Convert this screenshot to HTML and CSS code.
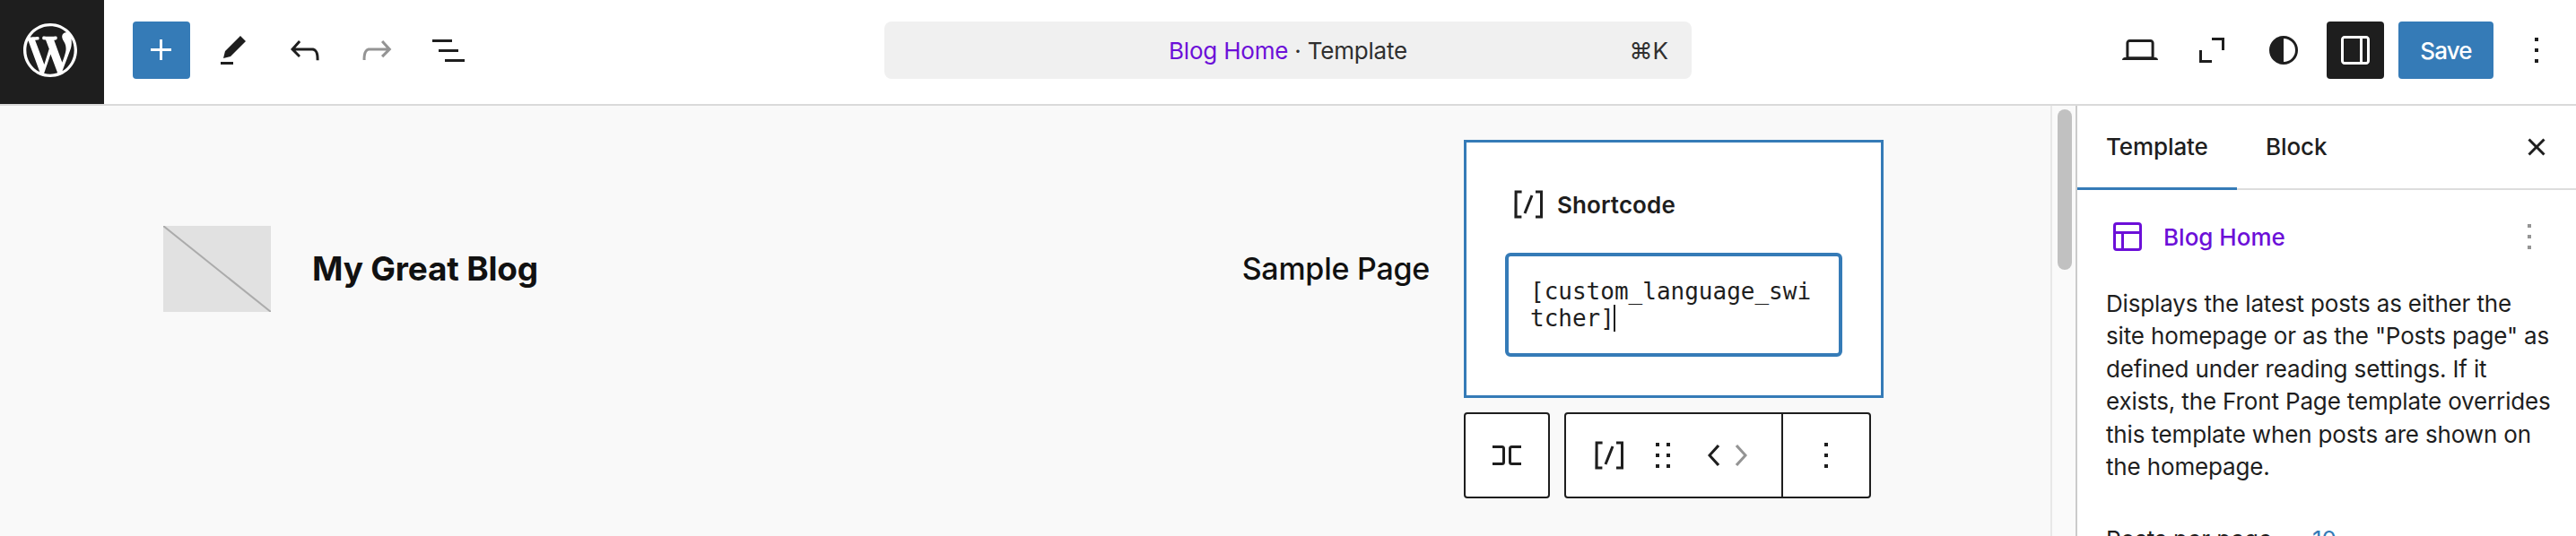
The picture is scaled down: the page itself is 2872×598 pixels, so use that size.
FILE: index.html
```html
<!DOCTYPE html>
<html lang="en">
<head>
<meta charset="utf-8">
<title>Blog Home · Template</title>
<link rel="stylesheet" href="styles.css">
</head>
<body>
<div class="editor">
  <header class="topbar">
    <a class="site-hub" aria-label="WordPress"><svg class="wp-logo" viewBox="-2 -2 24 24"><path d="M20 10c0-5.51-4.49-10-10-10C4.48 0 0 4.49 0 10c0 5.52 4.48 10 10 10 5.51 0 10-4.48 10-10zM7.78 15.37L4.37 6.22c.55-.02 1.17-.08 1.17-.08.5-.06.44-1.13-.06-1.11 0 0-1.45.11-2.37.11-.18 0-.37 0-.58-.01C4.12 2.69 6.87 1.11 10 1.11c2.33 0 4.45.87 6.05 2.34-.68-.11-1.65.39-1.65 1.58 0 .74.45 1.36.9 2.1.35.61.55 1.36.55 2.46 0 1.49-1.4 5-1.4 5l-3.03-8.37c.54-.02.82-.17.82-.17.5-.05.44-1.25-.06-1.22 0 0-1.44.12-2.38.12-.87 0-2.33-.12-2.33-.12-.5-.03-.56 1.2-.06 1.22l.92.08 1.26 3.41zM17.41 10c.24-.64.74-1.87.43-4.25.7 1.29 1.05 2.71 1.05 4.25 0 3.29-1.73 6.24-4.4 7.78.97-2.59 1.94-5.2 2.92-7.78zM6.1 18.09C3.12 16.65 1.11 13.53 1.11 10c0-1.3.23-2.48.72-3.59C3.25 10.3 4.67 14.2 6.1 18.09zm4.03-6.63l2.58 6.98c-.86.29-1.76.45-2.71.45-.79 0-1.57-.11-2.29-.33.81-2.38 1.62-4.74 2.42-7.1z"/></svg></a>
    <div class="tools">
      <a class="btn primary"><svg class="icon" viewBox="0 0 24 24"><path d="M11 12.5V17.5H12.5V12.5H17.5V11H12.5V6H11V11H6V12.5H11Z"/></svg></a>
      <a class="btn"><svg class="icon" viewBox="0 0 24 24"><path d="m19 7-3-3-8.5 8.5-1 4 4-1L19 7Zm-7 11.5H5V20h7v-1.5Z"/></svg></a>
      <a class="btn"><svg class="icon" viewBox="0 0 24 24"><path d="M18.3 11.7c-.6-.6-1.4-.9-2.3-.9H6.7l2.9-3.3-1.1-1-4.5 5L8.5 16l1-1-2.7-2.7H16c.5 0 .9.2 1.3.5 1 1 1 3.4 1 4.5v.3h1.5v-.2c0-1.5 0-4.3-1.5-5.7z"/></svg></a>
      <a class="btn disabled"><svg class="icon" viewBox="0 0 24 24"><path d="M15.6 6.5l-1.1 1 2.9 3.3H8c-.9 0-1.7.3-2.3.9-1.4 1.5-1.4 4.2-1.4 5.6v.2h1.5v-.3c0-1.1 0-3.5 1-4.5.3-.3.7-.5 1.3-.5h9.2L14.5 15l1.1 1.1 4.6-4.6-4.6-5z"/></svg></a>
      <a class="btn"><svg class="icon" viewBox="0 0 24 24"><path d="M3 6h11v1.5H3V6Zm3.5 5.5h11V13h-11v-1.5ZM21 17H10v1.5h11V17Z"/></svg></a>
    </div>
    <div class="command">
      <span></span>
      <span class="command-title"><span class="accent">Blog Home</span> · Template</span>
      <span class="command-key">⌘K</span>
    </div>
    <div class="actions">
      <a class="btn"><svg class="icon" viewBox="0 0 24 24"><path d="M20.5 16h-.7V8c0-1.1-.9-2-2-2H6.2c-1.1 0-2 .9-2 2v8h-.7c-.8 0-1.5.7-1.5 1.5h20c0-.8-.7-1.5-1.5-1.5zM5.7 8c0-.3.2-.5.5-.5h11.6c.3 0 .5.2.5.5v7.6H5.7V8z"/></svg></a>
      <a class="btn"><svg class="icon" viewBox="0 0 24 24"><path d="M12 5h7v7h-1.500V6.500H12zM5 12h1.500v5.500H12V19H5z"/></svg></a>
      <a class="btn"><svg class="icon" viewBox="0 0 24 24"><path fill-rule="evenodd" d="M20 12a8 8 0 1 1-16 0 8 8 0 0 1 16 0Zm-1.5 0a6.500 6.500 0 0 1-6.500 6.500v-13a6.500 6.500 0 0 1 6.500 6.500Z"/></svg></a>
      <a class="btn pressed"><svg class="icon" viewBox="0 0 24 24"><path fill-rule="evenodd" d="M18 4H6c-1.1 0-2 .9-2 2v12c0 1.1.9 2 2 2h12c1.1 0 2-.9 2-2V6c0-1.1-.9-2-2-2zM14.500 18.500H6c-.3 0-.5-.2-.5-.5V6c0-.3.2-.5.5-.5h8.500v13zm4-.5c0 .3-.2.5-.5.5h-2v-13h2c.3 0 .5.2.5.5v12z"/></svg></a>
      <a class="btn primary save">Save</a>
      <a class="btn"><svg class="icon" viewBox="0 0 24 24"><path d="M13 19h-2v-2h2v2zm0-6h-2v-2h2v2zm0-6h-2V5h2v2z"/></svg></a>
    </div>
  </header>
  <div class="body">
    <main class="canvas">
      <div class="site-header">
        <svg class="logo-placeholder" viewBox="0 0 120 96"><path d="M0 0L120 96"/></svg>
        <h1 class="site-title">My Great Blog</h1>
        <nav class="site-nav">Sample Page</nav>
        <section class="shortcode">
          <div class="shortcode-label"><svg class="icon" viewBox="0 0 24 24"><path d="M16 4.2v1.5h2.5v12.5H16v1.5h4V4.2h-4zM4.2 19.8h4v-1.5H5.8V5.8h2.5V4.2h-4l-.1 15.6zm5.1-3.1l1.4.6 4-10-1.4-.6-4 10z"/></svg><span>Shortcode</span></div>
          <div class="shortcode-input">[custom_language_switcher]<span class="caret"></span></div>
        </section>
      </div>
      <div class="block-toolbar">
        <div class="toolbar-box parent"><svg class="icon outline" viewBox="0 0 24 24"><path d="M4 7.250h5.250a1 1 0 0 1 1 1v7.500a1 1 0 0 1-1 1H4M20 7.250h-5.250a1 1 0 0 0-1 1v7.500a1 1 0 0 0 1 1H20"/></svg></div>
        <div class="toolbar-box">
          <div class="toolbar-group">
            <svg class="icon" viewBox="0 0 24 24"><path d="M16 4.2v1.5h2.5v12.5H16v1.5h4V4.2h-4zM4.2 19.8h4v-1.5H5.8V5.8h2.5V4.2h-4l-.1 15.6zm5.1-3.1l1.4.6 4-10-1.4-.6-4 10z"/></svg>
            <svg class="icon drag" viewBox="0 0 24 24"><path d="M8 7h2V5H8v2zm0 6h2v-2H8v2zm0 6h2v-2H8v2zm6-14v2h2V5h-2zm0 8h2v-2h-2v2zm0 6h2v-2h-2v2z"/></svg>
            <svg class="mover" viewBox="5 0 14 24"><path d="M14.6 7l-1.2-1L8 12l5.4 6 1.2-1-4.6-5z"/></svg>
            <svg class="mover disabled" viewBox="5 0 14 24"><path d="M10.6 6L9.4 7l4.6 5-4.6 5 1.2 1 5.4-6z"/></svg>
          </div>
          <div class="toolbar-more"><svg class="icon" viewBox="0 0 24 24"><path d="M13 19h-2v-2h2v2zm0-6h-2v-2h2v2zm0-6h-2V5h2v2z"/></svg></div>
        </div>
      </div>
    </main>
    <div class="scroll-track"><div class="scroll-thumb"></div></div>
    <aside class="sidebar">
      <div class="tabs">
        <div class="tab active">Template</div>
        <div class="tab">Block</div>
        <a class="btn close"><svg class="icon" viewBox="0 0 24 24"><path d="M12 13.060l3.712 3.713 1.061-1.060L13.061 12l3.712-3.712-1.060-1.060L12 10.938 8.288 7.227l-1.061 1.060L10.939 12l-3.712 3.712 1.060 1.061L12 13.061z"/></svg></a>
      </div>
      <div class="card">
        <svg class="icon accent" viewBox="0 0 24 24"><path fill-rule="evenodd" d="M18 5.500H6a.5.5 0 0 0-.5.5v3h13V6a.5.5 0 0 0-.5-.5zm.5 5H10v8h8a.5.5 0 0 0 .5-.5v-7.500zm-10 0h-3V18a.5.5 0 0 0 .5.5h2.500v-8zM6 4h12a2 2 0 0 1 2 2v12a2 2 0 0 1-2 2H6a2 2 0 0 1-2-2V6a2 2 0 0 1 2-2z"/></svg>
        <h2 class="card-title accent">Blog Home</h2>
        <svg class="icon disabled" viewBox="0 0 24 24"><path d="M13 19h-2v-2h2v2zm0-6h-2v-2h2v2zm0-6h-2V5h2v2z"/></svg>
      </div>
      <p class="description">Displays the latest posts as either the<br>site homepage or as the "Posts page" as<br>defined under reading settings. If it<br>exists, the Front Page template overrides<br>this template when posts are shown on<br>the homepage.</p>
      <div class="setting"><span class="setting-name">Posts per page</span><a class="setting-value">10</a></div>
    </aside>
  </div>
</div>
</body>
</html>
```
FILE: styles.css
```css
* { box-sizing: border-box; }
body {
  margin: 0;
  font-family: Inter, "Liberation Sans", sans-serif;
  font-size: 26px;
  color: #1e1e1e;
  background: #fff;
}
.editor { display: flex; flex-direction: column; height: 598px; overflow: hidden; }
.icon { display: block; flex: none; width: 48px; height: 48px; fill: currentColor; }
.outline { fill: none; stroke: currentColor; stroke-width: 1.5; }
.accent { color: #6c0fd8; }
.disabled { color: #949494; }

.topbar {
  flex: none;
  display: grid;
  grid-template-columns: 116px 870px 900px 1fr;
  height: 118px;
  border-bottom: 2px solid #dadada;
}
.site-hub { display: flex; align-items: center; padding: 0 0 4px 20px; background: #1e1e1e; color: #fff; }
.wp-logo { display: block; width: 72px; height: 72px; fill: currentColor; }
.tools, .actions { display: flex; gap: 16px; padding-top: 24px; }
.tools { padding-left: 32px; }
.actions { justify-content: flex-end; padding-right: 12px; }
.btn {
  display: flex;
  align-items: center;
  justify-content: center;
  width: 64px;
  height: 64px;
  border-radius: 4px;
}
.primary { background: #357bb7; color: #fff; }
.pressed { background: #1e1e1e; color: #fff; }
.save { width: 106px; font-weight: 500; letter-spacing: -0.9px; }
.command {
  display: grid;
  grid-template-columns: 1fr auto 1fr;
  align-items: center;
  height: 64px;
  margin-top: 24px;
  padding: 0 26px;
  border-radius: 8px;
  background: #f0f0f0;
  color: #2f2f2f;
}
.command-title { letter-spacing: -0.2px; }
.command-key { text-align: right; }

.body { flex: 1; display: flex; min-height: 0; }
.canvas { width: 2286px; padding: 38px 186px 0 182px; background: #f9f9f9; color: #111; }
.site-header { display: flex; align-items: center; height: 288px; }
.logo-placeholder { width: 120px; height: 96px; background: #e1e1e1; fill: none; stroke: #ababab; stroke-width: 2; }
.site-title { margin: 0 auto 0 46px; padding-bottom: 2px; font-size: 37px; font-weight: 700; letter-spacing: -0.2px; }
.site-nav { margin-right: 38px; padding-bottom: 2px; font-size: 34px; font-weight: 500; letter-spacing: -0.25px; }
.shortcode {
  width: 468px;
  height: 288px;
  padding: 45px 43px 0;
  border: 3px solid #357bb7;
  background: #fff;
  color: #1e1e1e;
}
.shortcode-label { display: flex; align-items: center; gap: 8px; height: 48px; padding-left: 2px; font-weight: 600; letter-spacing: 0.1px; }
.shortcode-input {
  height: 116px;
  margin-top: 30px;
  padding: 24px;
  border: 4px solid #357bb7;
  border-radius: 6px;
  font-family: "DejaVu Sans Mono", monospace;
  line-height: 30px;
  word-break: break-all;
}
.caret { display: inline-block; width: 2px; height: 30px; margin: 0 -2px 0 -1px; background: #1e1e1e; vertical-align: top; }
.block-toolbar { display: flex; gap: 16px; margin: 16px 0 0 1450px; color: #1e1e1e; }
.toolbar-box { display: flex; height: 96px; border: 2px solid #1e1e1e; border-radius: 4px; background: #fff; }
.parent { width: 96px; align-items: center; justify-content: center; }
.toolbar-group { display: flex; align-items: center; width: 240px; padding-left: 24px; }
.drag { margin: 0 20px 0 12px; }
.mover { width: 28px; height: 48px; fill: currentColor; }
.toolbar-more { display: flex; align-items: center; justify-content: center; width: 98px; border-left: 2px solid #1e1e1e; }

.scroll-track { width: 28px; padding: 4px 4px 0 6px; border-left: 2px solid #e8e8e8; background: #fafafa; }
.scroll-thumb { width: 16px; height: 179px; border-radius: 8px; background: #c1c1c1; }

.sidebar { flex: 1; border-left: 2px solid #cbcbcb; background: #fff; }
.tabs { display: flex; align-items: center; height: 94px; padding-right: 12px; border-bottom: 2px solid #ddd; font-weight: 500; }
.tab { height: 94px; margin-bottom: -2px; padding: 0 32px; line-height: 92px; letter-spacing: -0.1px; }
.active { width: 178px; border-bottom: 3px solid #357bb7; }
.close { margin-left: auto; }
.card { display: flex; align-items: center; height: 48px; margin-top: 28px; padding: 0 28px 0 32px; }
.card-title { margin: 0 auto 0 16px; font-size: 26px; font-weight: 500; }
.description { margin: 33px 0 0 32px; line-height: 36.4px; letter-spacing: -0.15px; white-space: nowrap; }
.setting { display: flex; margin: 45px 0 0 32px; line-height: 36px; }
.setting-name { width: 230px; }
.setting-value { color: #357bb7; }
```
